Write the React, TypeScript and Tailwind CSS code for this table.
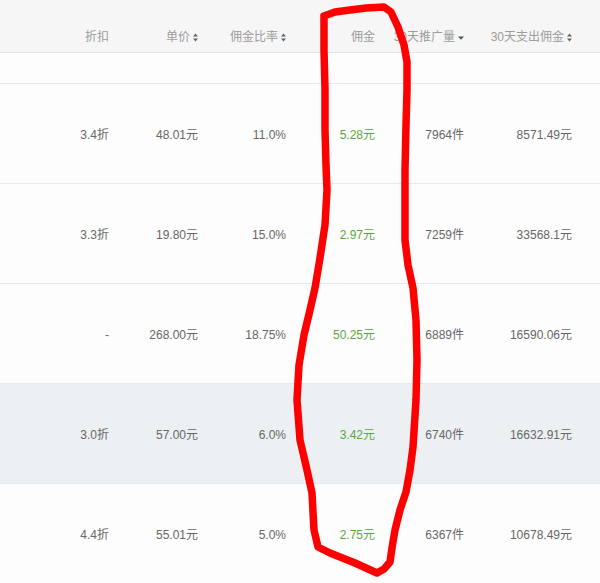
import React from "react";

const cols = "grid grid-cols-[121px_89px_88px_89px_89px_108px]";

function SortIcon() {
  return (
    <svg width="5" height="9" viewBox="0 0 5 9" className="ml-[3px]">
      <path d="M0 3.6 L2.5 0.6 L5 3.6 Z" fill="#666" />
      <path d="M0 5.4 L5 5.4 L2.5 8.4 Z" fill="#666" />
    </svg>
  );
}

function DownIcon() {
  return (
    <svg width="6" height="4" viewBox="0 0 6 4" className="ml-[3px]">
      <path d="M0 0.5 L6 0.5 L3 3.8 Z" fill="#555" />
    </svg>
  );
}

const rows = [
  ["3.4折", "48.01元", "11.0%", "5.28元", "7964件", "8571.49元"],
  ["3.3折", "19.80元", "15.0%", "2.97元", "7259件", "33568.1元"],
  ["-", "268.00元", "18.75%", "50.25元", "6889件", "16590.06元"],
  ["3.0折", "57.00元", "6.0%", "3.42元", "6740件", "16632.91元"],
  ["4.4折", "55.01元", "5.0%", "2.75元", "6367件", "10678.49元"],
];

const redPoints = [
  [324, 16], [335, 12], [350, 10], [366, 8], [384, 7], [391, 12], [398, 27], [404, 45], [407, 62],
  [407, 90], [406, 125], [405, 170], [405, 240], [408, 265], [413, 288], [416, 320], [417, 360],
  [416, 400], [413, 447], [410, 470], [406, 492], [400, 510], [395, 530], [392, 548], [390, 562],
  [384, 569], [377, 573], [355, 563], [330, 553], [318, 547], [314, 530], [313, 512], [312, 493],
  [307, 470], [300, 440], [297, 400], [299, 365], [304, 335], [310, 310], [315, 288], [320, 258],
  [325, 225], [327, 190], [326, 165], [325, 130], [325, 90], [324, 50], [324, 16],
];

export default function App() {
  return (
    <div className="relative w-[600px] h-[583px] bg-white overflow-hidden text-[12px] font-['Liberation_Sans','Noto_Sans_CJK_SC',sans-serif]">
      <div className={`${cols} h-[53px] bg-[#f6f6f6] border-b border-[#e4e4e4] text-[#9c9c9c]`}>
        <div className="flex items-end justify-end pr-3 pb-[6px]">折扣</div>
        <div className="flex items-end justify-end pr-3 pb-[6px]">
          <span>单价</span>
          <span className="mb-[4px]"><SortIcon /></span>
        </div>
        <div className="flex items-end justify-end pr-3 pb-[6px]">
          <span>佣金比率</span>
          <span className="mb-[4px]"><SortIcon /></span>
        </div>
        <div className="flex items-end justify-end pr-3 pb-[6px]">佣金</div>
        <div className="flex items-end justify-end pr-3 pb-[6px]">
          <span>30天推广量</span>
          <span className="mb-[6px]"><DownIcon /></span>
        </div>
        <div className="flex items-end justify-end pr-3 pb-[6px]">
          <span>30天支出佣金</span>
          <span className="mb-[4px]"><SortIcon /></span>
        </div>
      </div>
      <div className="h-[31px] bg-[#fdfdfd] border-b border-[#e8e8e8]" />
      {rows.map((r, i) => (
        <div
          key={i}
          className={`${cols} h-[100px] border-b border-[#e8e8e8] text-[#666] ${i === 3 ? "bg-[#edf0f3]" : "bg-[#fdfdfd]"}`}
        >
          {r.map((c, j) => (
            <div
              key={j}
              className={`flex items-center justify-end pr-3 pt-[3px] ${j === 3 ? "text-[#5aa63e]" : ""}`}
            >
              {c}
            </div>
          ))}
        </div>
      ))}
      <svg className="absolute inset-0 pointer-events-none" width="600" height="583" viewBox="0 0 600 583">
        <polyline
          points={redPoints.map((p) => p.join(",")).join(" ")}
          fill="none"
          stroke="#f00"
          strokeWidth="7.5"
          strokeLinejoin="round"
          strokeLinecap="round"
        />
      </svg>
    </div>
  );
}
